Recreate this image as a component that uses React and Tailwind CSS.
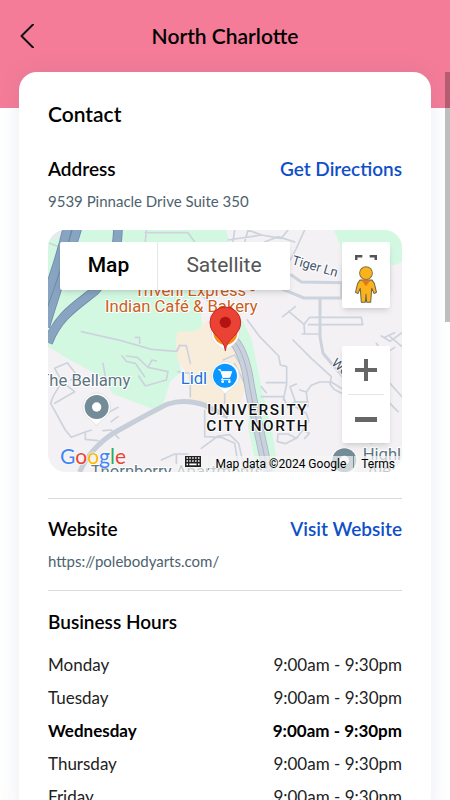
import React from 'react';

const hours = [
  { day: 'Monday', time: '9:00am - 9:30pm' },
  { day: 'Tuesday', time: '9:00am - 9:30pm' },
  { day: 'Wednesday', time: '9:00am - 9:30pm', today: true },
  { day: 'Thursday', time: '9:00am - 9:30pm' },
  { day: 'Friday', time: '9:00am - 9:30pm' },
];

// Map tiles, drawn at three units per pixel
const MapDrawing = () => (
  <svg
    viewBox="0 0 1062 726"
    preserveAspectRatio="xMidYMid slice"
    className="block h-full w-full font-['Roboto',sans-serif]"
    role="img"
    aria-label="Map of North Charlotte"
  >
    <rect width="1062" height="726" fill="#f3f1f4" />

    {/* parks */}
    <g fill="#d3f8e2">
      <path d="M0 0H535L548 60L540 130L455 195L462 290L440 305L388 308L384 340L392 395L400 425L366 455L345 525L325 541L195 492L160 440L75 395L0 350Z" />
      <path d="M858 0H1062V95L1040 105L900 105Z" />
      <path d="M545 255L580 265L612 330L640 470L672 600L684 680L684 726H628L600 590L606 480L580 370Z" />
    </g>
    <path d="M0 30L50 20L75 0H0Z" fill="#e6e9ee" />
    <path d="M388 306L445 303L480 270L580 370L590 480L575 528L500 528L440 510L424 506L420 430L390 395L383 345Z" fill="#f8eddb" />

    {/* minor roads */}
    <g fill="none" stroke="#cdd3dd" strokeWidth="5" strokeLinejoin="round" strokeLinecap="round">
      <path d="M295 0L292 36M292 8H420L440 36M0 38L60 60M100 305L220 332L310 358L385 364L395 347H415L427 400" />
      <path d="M275 340V322H262M222 378L235 394L262 400L290 440M235 378L268 382L300 412L360 425L355 450L292 468L272 438M300 412L312 390L325 393" />
      <path d="M560 0L555 36M600 0L590 36M540 30L640 15L700 25L720 0M640 15L600 0M650 36L690 20L740 36M770 0L745 55L727 90" />
      <path d="M730 135L760 156L885 158M700 176L768 204L880 204L882 160M816 204V320L825 370L850 400L885 440" strokeWidth="9" />
      <path d="M704 260L742 230M722 244L768 283L770 312M768 283L785 262H940L944 284H782M762 312H810M1000 318L1026 334L1062 308M985 340L1008 374L1040 352M1010 322L1040 308" />
      <path d="M598 270L635 320L692 378L697 405L716 410V462L706 510M655 458H716M640 470L655 488M640 500H706L718 530M735 330L790 385L850 440L846 462L858 478L885 492" />
      <path d="M718 530L742 515L780 516M742 515L726 470L745 462M780 530L775 486L790 466L815 456L850 456L885 478M775 486L755 480" />
      <path d="M742 530L775 550L782 572L765 600L745 625L720 612H690L688 635L712 641L750 622M765 600L784 610L770 625" />
      <path d="M1026 320L1062 350M1026 460L1062 500M1026 520L1050 545M970 640L985 600" />
      <path d="M20 415L58 398L90 440L68 450M20 415L42 455L15 500L8 520L52 600L70 622L106 608L130 600M42 455L80 485L20 520M165 400L172 440M112 605V628L150 632M190 575L210 560M165 602L190 600L212 625M180 548L210 532" />
      <path d="M395 345L388 362M427 500V430L390 425M470 540V620L520 622L560 640L570 700M460 655L510 618L545 614L572 640L590 720M340 690L380 672H420M385 675V700" />
      <path d="M525 390L560 375L575 400M530 490V520M500 230L460 195L480 180M560 400L590 460" />
    </g>
    <path d="M95 726C115 680 150 640 195 610C250 580 320 540 360 522C400 508 450 515 480 530L540 560" fill="none" stroke="#c5ced9" strokeWidth="15" />

    {/* arterial road under the pins */}
    <path d="M545 320C580 350 592 400 600 440C615 540 640 620 658 726" fill="none" stroke="#a9b5c5" strokeWidth="32" />
    <path d="M545 320C580 350 592 400 600 440C615 540 640 620 658 726" fill="none" stroke="#c8d1dc" strokeWidth="27" />
    <path d="M545 320C580 350 592 400 600 440C615 540 640 620 658 726" fill="none" stroke="#a9b5c5" strokeWidth="3" />

    {/* highways */}
    <g fill="none">
      <path d="M58 -6C48 40 32 100 -10 215M88 -6C70 60 30 160 -8 290M210 -6C208 70 190 130 140 183C80 230 30 260 0 338" stroke="#6c8bab" strokeWidth="29" />
      <path d="M58 -6C48 40 32 100 -10 215M88 -6C70 60 30 160 -8 290M210 -6C208 70 190 130 140 183C80 230 30 260 0 338" stroke="#88a4c1" strokeWidth="24" />
      <path d="M73 -6C58 60 28 150 -8 250" stroke="#6c8bab" strokeWidth="3" />
    </g>

    {/* place labels */}
    <g fontSize="50" fill="#c9601c" stroke="#fff" strokeWidth="6" paintOrder="stroke" textAnchor="middle">
      <text x="440" y="198">Triveni Express -</text>
      <text x="400" y="247">Indian Café &amp; Bakery</text>
    </g>
    <g stroke="#fff" strokeWidth="6" paintOrder="stroke">
      <text x="-26" y="469" fontSize="50" fill="#5c7480">The Bellamy</text>
      <text x="398" y="462" fontSize="50" fill="#1a73d8">Lidl</text>
      <text x="128" y="740" fontSize="50" fill="#5c7480">Thornberry Apartments</text>
      <text x="944" y="690" fontSize="50" fill="#5c7480">Highl</text>
      <text x="958" y="738" fontSize="50" fill="#5c7480">Alex</text>
      <text transform="translate(730 102) rotate(16)" fontSize="39" fill="#44546a">Tiger Ln</text>
      <text transform="translate(848 402) rotate(42)" fontSize="39" fill="#44546a">We</text>
      <g fontSize="46" fontWeight="500" fill="#111" textAnchor="middle" className="tracking-widest">
        <text x="629" y="556">UNIVERSITY</text>
        <text x="629" y="603">CITY NORTH</text>
      </g>
    </g>

    {/* The Bellamy pin */}
    <path d="M145 588C138 572 104 562 104 531A42 42 0 0 1 188 531C188 562 152 572 145 588Z" fill="#fff" stroke="#d5d9dd" strokeWidth="2" />
    <circle cx="146" cy="531" r="36" fill="#738c97" />
    <circle cx="146" cy="531" r="14" fill="#fff" />

    {/* Highl pin */}
    <circle cx="889" cy="695" r="42" fill="#fff" />
    <circle cx="889" cy="691" r="36" fill="#738c97" />
    <circle cx="889" cy="691" r="14" fill="#fff" />

    {/* Lidl pin */}
    <path d="M532 492C524 478 490 468 490 437A42 42 0 0 1 574 437C574 468 540 478 532 492Z" fill="#fff" stroke="#d5d9dd" strokeWidth="2" />
    <circle cx="531" cy="437" r="36" fill="#0c96ff" />
    <path d="M511 419H517L525 442H545L551 425H520" fill="#fff" stroke="#fff" strokeWidth="3" strokeLinejoin="round" />
    <path d="M525 442L520 449H547" fill="none" stroke="#fff" strokeWidth="3" />
    <circle cx="524" cy="455" r="4" fill="#fff" />
    <circle cx="544" cy="455" r="4" fill="#fff" />

    {/* restaurant pin behind the marker */}
    <path d="M532 363C520 350 490 340 490 308A42 42 0 0 1 574 308C574 340 544 350 532 363Z" fill="#fff" stroke="#d5d9dd" strokeWidth="2" />
    <circle cx="532" cy="308" r="36" fill="#f58a1f" />

    {/* location marker */}
    <path d="M532 362C529 322 486 318 486 277A46 46 0 0 1 578 277C578 318 536 322 532 362Z" fill="#ea4335" stroke="#c5221f" strokeWidth="3" />
    <circle cx="532" cy="277" r="17" fill="#b31412" />
  </svg>
);

const Pegman = () => (
  <svg viewBox="0 0 64 110" className="h-[37px] w-[22px]" aria-hidden="true">
    <path
      d="M14 42H50L57 52L63 78L56 82L49 66L46 108H34L32 84L30 108H18L15 66L8 82L1 78L7 52Z"
      fill="#fbb31c"
      stroke="#6b6348"
      strokeWidth="3"
      strokeLinejoin="round"
    />
    <path d="M19 42H45L32 60Z" fill="#e1771e" />
    <circle cx="32" cy="21" r="19" fill="#fbb31c" stroke="#8a7440" strokeWidth="3" />
  </svg>
);

const FullscreenIcon = () => (
  <svg viewBox="0 0 18 18" className="size-[22px]" fill="#555" aria-hidden="true">
    <path d="M0 0v6h2V2h4V0H0zm16 0h-4v2h4v4h2V0h-2zm0 16h-4v2h6v-6h-2v4zM2 12H0v6h6v-2H2v-4z" />
  </svg>
);

const KeyboardIcon = () => (
  <svg viewBox="0 0 16 11" className="h-[11px] w-4" aria-hidden="true">
    <path d="M0 0h16v11H0z" fill="#222" />
    <path
      d="M1.5 2h1.5M4.3 2h1.5M7.2 2h1.5M10.1 2h1.5M13 2h1.5M1.5 5h1.5M4.3 5h1.5M7.2 5h1.5M10.1 5h1.5M13 5h1.5M1.5 8.4h1.5M4.3 8.4h7.3M13 8.4h1.5"
      stroke="#fff"
      strokeWidth="1.6"
    />
  </svg>
);

const GoogleLogo = () => (
  <a
    href="#google"
    className="absolute bottom-1 left-3 font-['Lato',sans-serif] text-[21px] leading-6 [text-shadow:0_0_2px_#fff,0_0_2px_#fff]"
  >
    <span className="text-[#4285f4]">G</span>
    <span className="text-[#ea4335]">o</span>
    <span className="text-[#fbbc04]">o</span>
    <span className="text-[#4285f4]">g</span>
    <span className="text-[#34a853]">l</span>
    <span className="text-[#ea4335]">e</span>
  </a>
);

const MapCard = () => (
  <div className="relative mt-[19px] h-[242px] overflow-hidden rounded-[18px] font-['Roboto',sans-serif]">
    <MapDrawing />

    <div className="absolute left-3 top-3 flex h-12 rounded-xs bg-white text-[21px] shadow-md">
      <button type="button" className="w-[98px] border-r border-gray-200 font-medium text-black">
        Map
      </button>
      <button type="button" className="w-[132px] text-[#565656]">
        Satellite
      </button>
    </div>

    {/* street view sits over the lower half of the fullscreen button */}
    <div className="absolute right-3 top-3 flex flex-col">
      <button
        type="button"
        aria-label="Toggle fullscreen"
        className="flex size-12 items-center justify-center rounded-xs bg-white shadow-md"
      >
        <FullscreenIcon />
      </button>
      <button
        type="button"
        aria-label="Street View"
        className="-mt-[30px] flex size-12 items-center justify-center rounded-xs bg-white shadow-md"
      >
        <Pegman />
      </button>
    </div>

    <div className="absolute bottom-[29px] right-3 flex w-12 flex-col items-center rounded-xs bg-white shadow-md">
      <button type="button" aria-label="Zoom in" className="flex size-12 items-center justify-center">
        <svg viewBox="0 0 22 22" className="size-[22px]" fill="#666">
          <path d="M9 0h4v9h9v4h-9v9H9v-9H0V9h9z" />
        </svg>
      </button>
      <div className="h-px w-9 bg-[#e6e6e6]" />
      <button type="button" aria-label="Zoom out" className="flex size-12 items-center justify-center">
        <svg viewBox="0 0 22 22" className="size-[22px]" fill="#666">
          <path d="M0 9h22v5H0z" />
        </svg>
      </button>
    </div>

    <GoogleLogo />

    <div className="absolute bottom-0 right-0 flex h-4 items-center gap-px text-[12px] leading-4 text-black">
      <button type="button" aria-label="Keyboard shortcuts" className="flex h-4 items-start bg-[#f5f5f5]/70 px-[7px]">
        <KeyboardIcon />
      </button>
      <span className="bg-[#f5f5f5]/70 px-[7px]">Map data ©2024 Google</span>
      <a href="#terms" className="bg-[#f5f5f5]/70 px-[7px]">
        Terms
      </a>
    </div>
  </div>
);

const SectionHeader = ({ title, action, href }) => (
  <div className="flex items-center justify-between text-[19px] font-semibold leading-6">
    <h3>{title}</h3>
    {action && (
      <a href={href} className="text-[#0f50c8]">
        {action}
      </a>
    )}
  </div>
);

const App = () => {
  return (
    <div className="relative flex h-screen flex-col overflow-hidden bg-white font-['Lato',sans-serif] text-black">
      <header className="relative h-[108px] shrink-0 bg-[#f47c98]">
        <button type="button" aria-label="Back" className="absolute left-4 top-5 p-1">
          <svg viewBox="0 0 14 24" className="h-6 w-[14px]" fill="none" stroke="#111" strokeWidth="2">
            <path d="M13 0.5L1.5 12L13 23.5" strokeLinecap="round" strokeLinejoin="round" />
          </svg>
        </button>
        <h1 className="pt-[22px] text-center text-[21px] font-semibold leading-7">North Charlotte</h1>
      </header>

      <main className="relative z-10 mx-[19px] -mt-9 flex-1 rounded-t-[18px] bg-white px-[29px] pt-7 shadow-[0_0_20px_rgba(90,100,150,0.12)]">
        <h2 className="text-[21px] font-semibold leading-7">Contact</h2>

        <section className="mt-[29px] border-b border-[#d9dadb] pb-[26px]">
          <SectionHeader title="Address" action="Get Directions" href="#directions" />
          <p className="mt-[10px] text-[15px] leading-5 text-[#4d626d]">9539 Pinnacle Drive Suite 350</p>
          <MapCard />
        </section>

        <section className="border-b border-[#d9dadb] pb-[19px] pt-[18px]">
          <SectionHeader title="Website" action="Visit Website" href="https://polebodyarts.com/" />
          <p className="mt-[10px] text-[15px] leading-5 text-[#4d626d]">https://polebodyarts.com/</p>
        </section>

        <section className="pt-[19px]">
          <SectionHeader title="Business Hours" />
          <table className="mt-[14px] w-full text-[17px] leading-[33px]">
            <tbody>
              {hours.map(({ day, time, today }) => (
                <tr key={day} className={today ? 'font-bold' : 'font-normal text-[#222]'}>
                  <th scope="row" className={today ? 'text-left font-bold' : 'text-left font-normal'}>
                    {day}
                  </th>
                  <td className="text-right">{time}</td>
                </tr>
              ))}
            </tbody>
          </table>
        </section>
      </main>

      {/* scroll thumb */}
      <div className="absolute right-0 top-[72px] z-20 h-[250px] w-[5px] bg-black/25" />
    </div>
  );
};

export default App;
